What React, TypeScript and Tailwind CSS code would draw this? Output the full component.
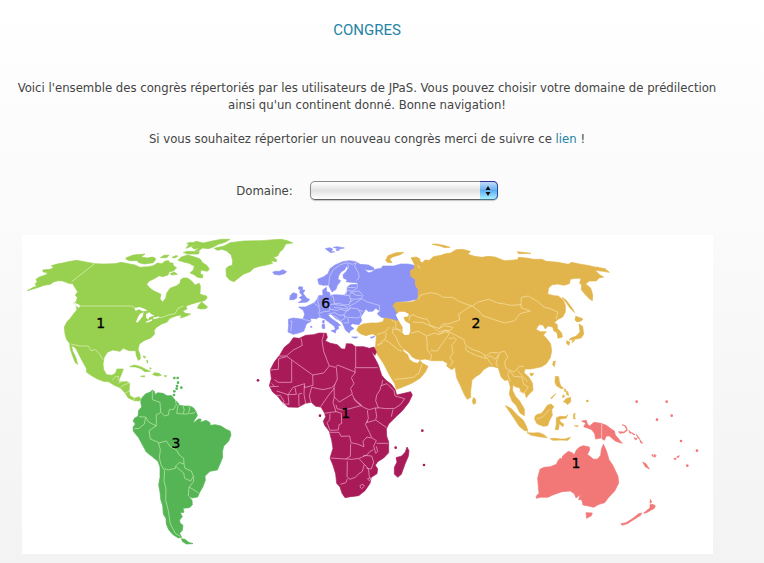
import { useId } from "react";

type Region = {
  name: string;
  color: string;
  border: string;
  /** Offset of the region's own grid inside the map. */
  at: [number, number];
  land: string[];
  borders: string[];
  water?: string[];
  dots?: [number, number][];
  count?: { value: number; x: number; y: number };
};

const regions: Region[] = [
  {
    name: "Amérique du Nord",
    color: "#98d04f",
    border: "#e4f5c4",
    at: [-6, 0],
    land: [
      "M22 167L40 157L50 154L45 146L52 142L48 133L58 126L76 120L84 113L70 111L68 105L90 103L101 98L94 92L112 87L128 84L145 80L170 76L192 80L225 86L250 87L285 86L303 82L325 86L345 90L360 97L385 95L400 92L412 84L425 86L436 78L446 77L450 84L459 84L460 92L470 98L460 108L448 110L444 120L428 125L418 122L405 130L388 138L380 148L390 160L402 168L423 178L420 192L428 201L437 190L440 175L450 160L470 152L480 145L482 134L490 129L502 129L515 138L525 150L538 145L541 153L540 178L560 183L561 190L553 197L533 202L515 207L498 213L501 222L488 228L496 235L512 237L500 243L482 249L484 240L470 242L450 250L440 262L425 267L408 278L402 287L404 297L392 309L372 317L358 327L354 343L360 358L361 372L355 376L349 362L347 347L327 347L310 340L300 349L278 345L262 352L252 368L249 388L251 404L260 419L276 421L286 415L291 402L310 402L305 416L298 432L296 441L321 440L329 445L327 467L330 482L343 490L357 485L364 494L357 498L343 497L325 489L315 474L302 459L283 451L266 440L250 439L232 432L213 421L200 412L199 400L189 382L178 361L169 343L160 334L155 334L158 348L167 366L173 388L166 383L158 363L151 343L149 325L140 314L135 297L133 276L141 260L151 250L162 235L171 225L168 210L161 204L168 201L172 188L166 180L173 170L165 158L158 146L146 145L128 138L115 137L102 140L91 148L72 151L58 156L42 161Z",
      "M317 69L340 60L375 57L363 66L382 69L395 67L408 72L400 83L374 87L356 83L352 77L330 77L320 74Z",
      "M383 72L396 66L405 69L398 78L386 79ZM421 68L432 61L447 60L440 68ZM474 76L484 66L503 60L527 67L540 72L548 83L560 91L568 102L562 109L543 105L541 116L549 120L547 129L533 127L520 118L510 114L520 105L523 94L507 85L491 81ZM450 116L463 111L472 118L456 120Z",
      "M498 40L507 28L529 19L550 24L581 17L605 13L630 13L615 22L595 28L580 36L565 41L548 39L535 48L525 47L539 38L522 42L515 36L530 28ZM500 26L510 22L522 25L513 30ZM490 52L504 49L538 50L535 57L502 57ZM456 67L467 62L474 63L465 69Z",
      "M583 40L612 33L630 23L672 18L725 17L762 14L785 13L805 18L818 24L797 27L789 43L779 51L773 63L760 67L770 74L769 80L752 77L758 85L735 91L718 94L702 99L690 110L670 118L657 128L642 140L629 135L619 124L618 101L625 94L637 91L638 77L633 59L620 48L606 43L592 46Z",
      "M532 219L537 209L545 201L552 207L563 216L557 221L541 222Z",
      "M329 395L343 390L362 395L377 403L391 409L374 410L363 401L347 396ZM398 419L403 413L417 415L424 421L412 423ZM362 424L374 422L373 426ZM432 422L440 422L437 426ZM369 363L377 365L374 370ZM380 375L384 378L382 385ZM389 398L394 400L391 403Z",
    ],
    borders: [
      "M224 86L155 140",
      "M178 213H334L347 219",
      "M153 327L179 333L205 333L213 347L226 344L238 356L249 374",
      "M277 436L286 424L295 424L294 436M296 445L309 436M302 456L315 448L328 445M315 474L327 469M343 490L340 497M399 248L427 247L445 240L465 236L474 220L490 213",
    ],
    water: [
      "M343 220L358 216L375 222L382 228L368 229L357 223L347 228Z",
      "M360 236L371 232L369 242L359 256L352 263L348 260L354 246Z",
      "M378 237L388 232L396 239L404 241L397 244L389 246L384 254L378 247Z",
      "M377 260L397 252L396 257L381 263ZM399 249L417 244L416 249L401 253Z",
      "M160 201L180 211L177 219L169 213Z",
    ],
    count: { value: 1, x: 242, y: 279 },
  },
  {
    name: "Amérique du Sud",
    color: "#55b555",
    border: "#c5ecb5",
    at: [294, 405],
    land: [
      "M62 95L66 83L77 71L90 67L97 60L104 65L105 74L113 68L129 70L141 77L155 77L163 88L174 98L178 106L193 108L208 108L220 113L228 124L232 137L223 151L219 160L235 147L243 147L242 157L258 151L270 158L270 166L286 164L303 168L318 178L330 183L333 195L326 213L311 229L307 246L308 262L299 284L292 300L270 304L255 318L256 331L248 352L239 367L233 381L216 384L204 378L216 391L217 405L208 413L189 415L192 427L181 428L187 440L179 450L180 459L189 466L187 481L179 490L185 502L175 504L159 494L146 479L139 462L138 446L130 432L128 407L122 388L120 367L116 345L120 322L120 292L114 274L97 260L79 246L68 226L56 203L40 184L39 172L46 162L39 153L44 144L54 139L56 121L65 111Z",
      "M184 506L195 508L206 517L219 521L199 522L188 515Z",
    ],
    borders: [
      "M97 63L97 89L120 97L122 126L134 138L145 135L148 119L161 118L169 104L166 90M122 128L109 134L109 168L86 156L77 141L57 140M77 142L73 162L56 176L43 175M108 168L87 182L91 207L115 217L121 239L118 263L123 284L134 302L132 332L138 357L137 391L145 422L151 462L167 491L181 499M116 219L139 213L150 229L171 242L177 254L191 265L192 282L178 277L168 287L166 295L145 300L134 296M168 290L191 309L194 325L212 333L220 319L214 303L195 295L192 282M221 319L221 334L207 352L205 378M208 351L236 369M174 105L170 130L188 132L193 120L189 108M189 132L204 132L209 120L207 109M208 131L222 129L228 123",
    ],
    dots: [[163, 24], [173, 24], [174, 38], [171, 48], [184, 53], [170, 56], [163, 64], [162, 75]],
    count: { value: 3, x: 168, y: 234 },
  },
  {
    name: "Europe",
    color: "#8c93f5",
    border: "#d6d7fc",
    at: [684, 0],
    land: [
      "M114 291L116 271L115 253L130 249L159 253L164 238L160 226L146 216L166 216L181 209L193 203L201 193L206 182L219 181L218 165L229 157L230 170L239 173L240 181L256 179L283 181L291 170L292 156L301 149L322 148L322 143L303 142L288 140L292 135L280 129L279 119L289 109L295 99L289 94L284 104L273 111L266 122L264 133L272 137L267 145L262 151L258 163L246 171L241 161L236 150L221 151L207 148L203 133L221 125L234 116L240 101L255 90L278 80L298 77L317 80L330 88L355 90L372 99L371 105L353 105L343 103L355 113L366 111L376 103L394 100L398 93L431 93L453 87L474 87L497 92L493 103L481 106L484 124L496 134L498 154L506 165L503 192L474 198L440 202L430 213L437 223L443 235L442 248L447 256L430 259L416 252L394 247L382 237L389 227L377 220L368 229L354 229L348 221L340 234L332 246L335 257L327 269L307 266L301 272L312 281L301 287L298 294L287 286L280 270L275 260L257 250L242 237L234 240L243 250L261 262L272 271L264 273L266 281L257 285L253 274L236 261L223 251L207 246L200 251L181 250L183 259L169 267L165 279L161 289L143 295L130 298Z",
      "M147 155L158 156L157 164L165 166L159 175L166 184L170 190L179 193L172 201L145 203L157 194L148 188L157 181L149 173L151 164L145 162Z",
      "M119 194L121 181L130 173L141 177L140 189L131 194Z",
      "M68 111L78 109L89 109L98 104L110 110L103 116L87 120L73 118Z",
      "M226 41L239 38L248 42L243 50L254 50L242 53L235 48ZM250 37L261 35L283 39L267 42ZM258 43L269 44L261 48Z",
      "M231 172L239 174L237 180ZM218 257L223 256L222 265L218 264ZM216 269L224 268L224 281L217 280ZM243 287L259 283L256 294ZM305 306L323 306L316 310ZM361 307L375 304L366 310ZM180 275L186 274L185 278Z",
    ],
    borders: [
      "M120 258L126 259L122 289M159 253L182 258M193 205L205 214L209 227L206 235L211 246M205 185L203 201L209 215M240 181L249 184L254 206L235 211L241 222L237 229L221 230L209 235M254 206L269 205L279 210L297 209L303 196L298 182L282 180M250 207L269 211L281 211L294 218L292 222L269 219L252 217M242 223L263 227L270 222L289 228L301 219L297 211M236 237L254 233L267 241L281 240L291 226M245 241L257 245L272 258L286 249L281 240L293 248L296 263L280 264M295 247L326 249L334 239L325 222L304 219L290 229M300 212L314 205L336 191L347 199L370 206L388 211L389 230M300 191L314 193L333 191L339 181L327 168L305 172L297 182M291 167L309 168L321 160L322 147M292 157L317 158M288 168L289 180M309 197L298 200M326 225L339 229",
      "M236 150L239 124L251 103L271 89L293 83M293 86L296 99M293 83L307 88L319 83L314 94L326 115L327 129L319 137M301 170L316 180L334 182",
    ],
    count: { value: 6, x: 227, y: 218 },
  },
  {
    name: "Asie",
    color: "#e2b54c",
    border: "#f8e2ac",
    at: [984, 0],
    land: [
      "M183 68L199 66L209 71L210 79L222 87L221 101L213 103L207 93L201 86L205 97L215 104L223 92L218 82L225 75L238 76L250 65L273 61L286 56L302 54L318 44L337 43L361 49L354 58L374 64L396 67L414 64L435 66L448 71L463 77L503 74L505 67L530 69L550 73L576 73L588 79L624 82L655 88L665 82L688 87L719 92L746 99L738 96L765 101L778 112L760 109L735 106L749 119L761 126L747 129L739 138L718 138L707 147L722 159L728 179L727 197L718 191L707 180L694 164L695 151L689 144L693 130L675 130L661 133L658 146L641 151L623 147L606 149L596 159L593 177L611 182L625 183L639 195L646 210L646 231L638 246L624 253L613 263L622 269L622 280L635 294L637 306L624 310L621 293L611 287L608 276L594 273L586 282L579 270L567 269L558 283L570 290L589 290L580 300L592 313L602 327L605 348L601 368L589 386L575 395L553 400L541 402L525 402L522 413L537 427L547 444L549 466L535 480L529 488L525 474L513 471L509 458L497 456L489 449L488 467L497 485L509 498L523 522L523 542L510 534L499 512L486 498L478 478L481 456L475 435L463 436L453 425L445 399L431 395L418 394L402 403L391 416L376 426L366 436L362 467L362 487L352 493L344 481L332 454L320 428L315 397L305 404L290 393L292 385L278 377L246 377L225 372L214 374L198 372L187 366L175 352L158 340L160 349L173 359L178 373L190 382L204 385L210 376L216 384L234 394L226 411L211 429L187 444L153 458L139 463L134 446L117 418L101 386L82 358L75 342L77 331L79 303L67 296L48 302L31 296L20 286L26 274L39 267L62 264L82 264L99 260L103 249L125 253L142 258L151 255L144 239L135 220L128 213L137 202L160 202L189 200L204 191L205 163L196 151L196 133L182 124L182 106L192 102L194 89Z",
      "M107 76L114 62L138 53L161 52L151 59L130 65L119 72L126 83L112 82ZM246 28L260 27L285 32L300 37L284 38L270 33ZM502 50L543 55L506 56Z",
      "M636 187L648 195L658 208L668 222L674 233L660 219L650 205ZM677 244L690 248L699 252L693 258L681 261L675 255ZM687 267L698 274L701 298L693 309L674 313L657 315L662 309L678 304L690 291ZM650 317L659 321L657 331L650 326ZM667 316L674 316L667 323Z",
      "M610 379L616 378L613 395L608 390ZM540 415L551 415L546 423L541 421ZM371 487L377 494L377 505L370 508L367 497Z",
      "M616 424L626 425L628 440L632 452L641 460L634 461L620 453L615 442ZM645 461L651 473L642 467ZM653 469L656 482L649 478ZM640 501L648 491L662 487L662 500L653 509L645 501ZM639 479L645 484L638 488ZM617 476L605 491L602 489Z",
      "M466 512L483 520L501 539L520 556L529 573L534 589L522 586L507 573L491 548ZM531 593L548 594L567 593L582 599L592 608L573 606L544 601ZM555 544L562 538L573 536L581 527L592 511L603 507L612 515L605 524L607 541L599 555L593 572L580 574L561 566L554 552ZM619 548L631 544L648 545L653 539L649 549L628 553L632 562L641 567L639 575L628 566L625 584L616 584L619 567ZM600 611L614 610L630 612L645 612L661 607L654 616L632 615L609 616ZM671 537L675 534L674 548L677 551L670 551ZM673 572L685 572L682 575Z",
    ],
    borders: [
      "M205 193L212 180L242 173L262 177L280 187L309 187L324 198L350 208L367 213L382 202L416 193L443 204L464 207L481 211L513 209L514 187L535 183L563 199L583 217L602 221L624 232L618 252",
      "M367 213L387 228L398 242L430 253L465 264L494 257L510 236L541 228L514 219L513 208M365 213L354 218L326 238L329 255L301 265L276 268L268 281L242 271L232 253L204 247L190 239L180 243L177 257M188 261L220 263L252 278L266 291L285 285L314 299L341 313L346 329L366 343L393 352L407 363L423 352L446 354L463 348L474 366L464 380L467 400L493 411L509 393L522 395M266 281L284 272L308 277L302 286L282 287L268 299M183 294L205 289L229 302L231 318L232 345L245 362L241 376M231 303L252 294L266 298L288 290L298 296L277 325L262 348L242 347M297 311L313 308L319 315L305 331L309 354L299 370L310 379L299 394M346 335L349 347L382 363L408 370L404 360M410 370L420 362L435 373L447 358L438 385L443 395M412 370L420 382L427 391M478 407L473 420L481 440M480 407L491 424L515 426L521 448L535 456L521 476L504 468M503 406L517 423L532 440",
      "M124 254L138 263L137 281L154 286M118 276L105 291L81 299M130 276L127 292L139 308L144 321L155 339M108 293L107 310L83 331M102 313L120 324L145 345L156 348M81 332L98 324M133 433L159 431L190 427L207 414L216 387M131 284L142 282L154 292M560 552L578 546L592 530L600 523",
    ],
    water: [
      "M137 239L148 230L164 230L176 237L175 244L160 247L166 259L180 267L181 288L177 299L164 300L157 293L158 277L148 260Z",
    ],
    dots: [[712, 498]],
    count: { value: 2, x: 378, y: 279 },
  },
  {
    name: "Afrique",
    color: "#a91b58",
    border: "#f1aed0",
    at: [684, 270],
    land: [
      "M130 38L148 40L167 31L190 29L208 24L229 25L232 37L226 48L242 55L262 59L275 72L286 72L289 56L306 57L316 65L341 65L358 70L372 66L379 81L375 91L364 79L373 97L385 120L395 151L407 165L424 178L435 193L440 210L462 205L482 200L487 210L476 233L457 257L437 276L416 297L409 312L410 333L416 351L416 383L401 399L383 410L376 421L383 432L381 446L364 457L360 475L345 497L326 512L302 515L285 518L276 505L270 486L260 475L257 447L249 421L240 399L249 370L245 346L238 319L224 301L220 289L227 275L223 263L213 246L197 244L184 232L166 235L144 247L114 246L95 229L82 212L68 201L58 182L64 161L61 134L73 111L90 89L103 67L119 54Z",
      "M471 366L477 377L475 394L465 417L454 448L443 457L433 447L433 427L441 411L438 398L455 393L466 381Z",
    ],
    borders: [
      "M153 40L157 61L130 75L109 93L86 93M109 93L188 150L189 181L163 188L164 176L129 187L114 209L80 198M109 95L86 101L85 133L61 135M125 106V172H85L73 164M188 150L221 144L238 123L221 79L216 47L222 26M238 122L256 127L263 120L317 142M317 65V128H383M315 128V144L304 158L312 176L302 190L307 207L268 231L253 216L252 184L262 162L259 127M256 178L245 188L219 194L185 187L178 213L183 233M163 182L162 208L167 235M156 205L146 207L147 243M135 188L139 208L114 209L117 238L98 236M60 185L86 184M65 175L73 184M76 211L91 211L102 229L99 239M212 245L234 213L254 188M253 216L249 233L258 260L223 265M258 240L261 251L276 255L300 251L332 242L345 249L358 254L374 249L385 249L377 227L380 210L390 195L393 182L411 176L432 197L435 213L464 221L452 238L434 250L408 251L384 248M307 209L316 228L334 243M336 242L311 221M395 183L398 165M429 253L424 275M352 256L355 280L350 293L377 285L410 308M376 249L380 274L377 284M240 266L239 285L231 293L240 316L265 315L267 299L275 295L274 265L256 259M239 322L267 322L273 334L299 333L303 353L322 357L342 365L339 349L351 336L366 339L379 347L371 363L377 385L383 380L379 364M353 286L346 298L358 322L365 337M380 355L415 355M302 356L301 394L287 402L242 399M287 402L306 403L328 400L351 390L359 380L370 374M328 402L343 418L337 439L325 447L316 457L299 463L291 454L292 409M292 461L288 473L271 478M343 418L355 431L358 455L364 465M340 391L365 393L371 411L364 432L349 430M331 481L339 478L343 484L335 491L330 486ZM353 461L360 458L363 463L357 467Z",
    ],
    dots: [[24, 166], [210, 272], [437, 368], [517, 317], [522, 420]],
    count: { value: 1, x: 287, y: 279 },
  },
  {
    name: "Océanie",
    color: "#f27777",
    border: "#fde0e0",
    at: [1404, 405],
    land: [
      "M150 298L162 292L181 290L199 283L204 272L211 264L214 269L218 258L235 244L246 248L253 254L259 240L269 231L280 227L298 231L299 240L292 253L311 268L323 267L332 256L334 238L340 223L347 237L351 248L357 269L368 285L384 319L386 339L374 363L355 383L344 398L327 403L311 412L295 408L279 405L275 389L266 389L271 374L258 384L253 371L241 363L216 365L188 375L174 382L151 382L139 385L139 378L147 370L145 350L143 324Z",
      "M288 428L307 429L304 437L290 445ZM393 461L408 458L429 445L446 431L455 429L452 436L428 451L412 461L396 466ZM461 430L473 419L480 414L480 404L488 403L496 407L493 415L482 421L470 428ZM481 388L485 397L480 400Z",
      "M275 153L289 151L292 162L299 168L312 157L333 160L349 166L365 178L373 183L376 195L397 220L377 214L358 198L349 198L343 211L332 204L317 207L314 191L305 179L292 174L281 170L287 160Z",
      "M386 185L401 186L410 179L405 168L396 164L408 168L412 181L403 188L389 190ZM417 181L424 190L419 189ZM424 187L435 194L430 194ZM432 203L442 206L437 210ZM439 193L449 206L444 204ZM449 208L458 220L452 218ZM458 276L468 281L478 297L466 290ZM486 252L491 259L487 259ZM493 252L499 258L493 262ZM551 266L559 264L556 270ZM560 260L568 257L565 263Z",
    ],
    borders: ["M335 161V208"],
    dots: [[440, 95], [530, 95], [501, 149], [545, 137], [573, 213], [621, 242], [592, 287]],
    count: { value: 1, x: 258, y: 294 },
  },
];

function WorldMap() {
  return (
    <svg
      viewBox="0 0 2073 957"
      role="img"
      aria-label="Congrès par continent"
      className="mt-[35px] block w-full max-w-[691px] bg-white"
    >
      {regions.map((r) => (
        <g key={r.name} transform={`translate(${r.at[0]} ${r.at[1]})`} strokeLinejoin="round">
          {r.land.map((d) => (
            <path key={d} d={d} fill={r.color} stroke={r.color} strokeWidth="2" />
          ))}
          {r.borders.map((d) => (
            <path key={d} d={d} fill="none" stroke={r.border} strokeWidth="2" />
          ))}
          {r.water?.map((d) => (
            <path key={d} d={d} fill="#fff" />
          ))}
          {r.dots?.map(([x, y]) => (
            <circle key={`${x}-${y}`} cx={x} cy={y} r="4" fill={r.color} />
          ))}
        </g>
      ))}
      {regions.map(
        (r) =>
          r.count && (
            <text
              key={r.name}
              x={r.at[0] + r.count.x}
              y={r.at[1] + r.count.y}
              textAnchor="middle"
              className="fill-black stroke-black font-['DejaVu_Sans',sans-serif] text-[42px]"
            >
              {r.count.value}
            </text>
          ),
      )}
    </svg>
  );
}

function DomainSelect() {
  const id = useId();
  return (
    <div className="mt-[34px] flex items-center justify-center gap-[17px]">
      <label htmlFor={id}>Domaine:</label>
      <div className="relative h-[19px] w-[188px]">
        <select
          id={id}
          className="block h-full w-full appearance-none rounded-[5px] border border-[#8a8a8a] border-b-[#606060] bg-linear-to-b from-white via-[#e2e2e2] to-white shadow-[0_1px_1px_#c4c4c4]"
        >
          <option value=""></option>
        </select>
        <span className="pointer-events-none absolute inset-y-0 right-0 flex w-[18px] items-center justify-center rounded-r-[5px] border-t border-r border-b border-t-[#30309a] border-r-[#254ba4] border-b-[#48708a] bg-linear-to-b from-[#c3dcf6] via-[#62aef0] to-[#a8f0ff]">
          <svg viewBox="0 0 6 12" className="h-3 w-[6px]" aria-hidden="true">
            <path d="M3 1L5.5 5H.5ZM3 11L.5 7H5.5Z" fill="#111" />
          </svg>
        </span>
      </div>
    </div>
  );
}

export default function App() {
  return (
    <main className="min-h-screen bg-linear-to-b from-white to-[#f3f3f3] pr-[30px] pb-2 font-['DejaVu_Sans_Condensed','DejaVu_Sans',sans-serif] text-[13px] leading-[17px] text-[#444444]">
      <div className="mx-auto flex max-w-[720px] flex-col items-center pt-5 text-center">
        <h1 className="font-['Roboto',sans-serif] text-[15px] leading-5 text-[#2583a5]">
          CONGRES
        </h1>
        <p className="mt-[39px]">
          Voici l'ensemble des congrès répertoriés par les utilisateurs de JPaS. Vous pouvez choisir
          votre domaine de prédilection ainsi qu'un continent donné. Bonne navigation!
        </p>
        <p className="mt-[17px]">
          Si vous souhaitez répertorier un nouveau congrès merci de suivre ce{" "}
          <a href="#nouveau" className="text-[#2583a5]">
            lien
          </a>{" "}
          !
        </p>
        <DomainSelect />
        <WorldMap />
      </div>
    </main>
  );
}
